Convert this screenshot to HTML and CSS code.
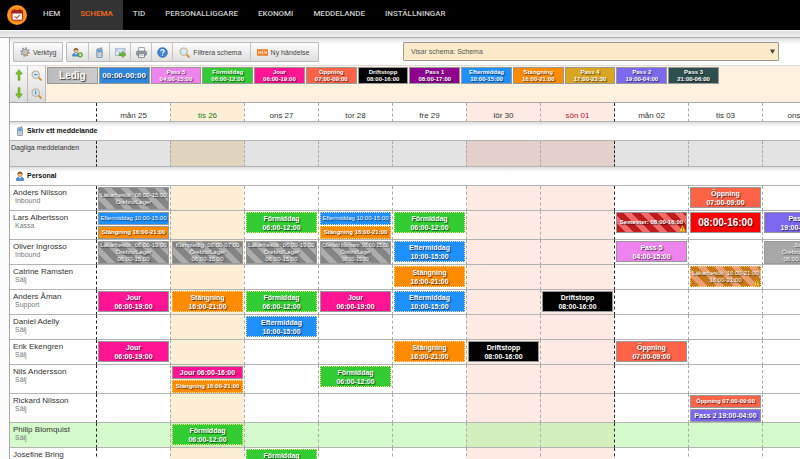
FILE: index.html
```
<!DOCTYPE html>
<html lang="sv">
<head>
  <meta charset="UTF-8">
  <meta name="viewport" content="width=device-width, initial-scale=1.0">
  <title>Schema</title>
  <link rel="stylesheet" href="styles.css">
</head>
<body>
  <svg class="sprite" aria-hidden="true">
    <symbol id="warn" viewBox="0 0 12 12">
      <path d="M6 1 L11.5 11 H0.5 Z" fill="#ffd83a" stroke="#c98a00" stroke-linejoin="round"/>
      <path d="M6 4.2 V7.6 M6 8.6 V9.8" stroke="#5a3a00" stroke-width="1.3"/>
    </symbol>
    <symbol id="phone" viewBox="0 0 16 16">
      <path d="M10.5 0.5 V4" stroke="#6b7f92" stroke-width="1.5"/>
      <rect x="4" y="2.5" width="8" height="13" rx="1.5" fill="#a9bccd" stroke="#6b7f92"/>
      <rect x="5.5" y="4" width="5" height="3.5" fill="#4da3e8"/>
      <path d="M5.5 9.5 H10.5 M5.5 11.5 H10.5 M5.5 13.5 H10.5" stroke="#fff" stroke-dasharray="1.2 0.7"/>
    </symbol>
    <symbol id="person" viewBox="0 0 16 16">
      <path d="M2 15 C2 10.5 4.5 9.5 8 9.5 C11.5 9.5 14 10.5 14 15 Z" fill="#4b8fdc" stroke="#2b62a8"/>
      <path d="M6.2 9.5 L8 12.5 L9.8 9.5 Z" fill="#fff"/>
      <circle cx="8" cy="5" r="3.6" fill="#f6c48b" stroke="#a8682c"/>
      <path d="M4.2 5 C4 0 12 0 11.8 5 C10.5 3.4 6.5 3.6 4.2 5 Z" fill="#8a4b16"/>
    </symbol>
    <symbol id="lens" viewBox="0 0 16 16">
      <path d="M10.5 10.5 L14.5 14.5" stroke="#d8892b" stroke-width="2.6" stroke-linecap="round"/>
      <circle cx="6.8" cy="6.8" r="5.3" fill="#d3eafa" stroke="#c0a880" stroke-width="1.5"/>
    </symbol>
    <symbol id="arrow" viewBox="0 0 12 18">
      <path d="M6 1 L11 7 L9 8.2 L7.4 6.4 V17 H4.6 V6.4 L3 8.2 L1 7 Z" fill="#7cc427" stroke="#4d8d10" stroke-width="0.8"/>
    </symbol>
  </svg>

  <header class="topbar">
    <a href="#" class="logo" aria-label="Start">
      <svg viewBox="0 0 20 20" width="20" height="20">
        <circle cx="10" cy="10" r="10" fill="#ff8a0c"/>
        <circle cx="10" cy="10" r="8.6" fill="none" stroke="#ffa843" stroke-width="0.8"/>
        <rect x="5" y="5.6" width="10.4" height="9.6" rx="1.2" fill="#fff" stroke="#a3241c"/>
        <rect x="4.6" y="5.2" width="11.2" height="3.4" rx="0.8" fill="#a3241c"/>
        <path d="M7.4 4 V6.6 M13 4 V6.6" stroke="#a3241c" stroke-width="1.2"/>
        <path d="M7.6 11.4 L9.6 13.2 L13 10" fill="none" stroke="#c9524a" stroke-width="1.1"/>
      </svg>
    </a>
    <nav>
      <a href="#">HEM</a>
      <a href="#" class="active">SCHEMA</a>
      <a href="#">TID</a>
      <a href="#">PERSONALLIGGARE</a>
      <a href="#">EKONOMI</a>
      <a href="#">MEDDELANDE</a>
      <a href="#">INSTÄLLNINGAR</a>
    </nav>
  </header>

  <main class="panel">
    <div class="toolbar">
      <div class="btn-group">
        <button type="button">
          <svg viewBox="0 0 16 16" width="10" height="10">
            <circle cx="8" cy="8" r="6.2" fill="none" stroke="#8c8c8c" stroke-width="2.6" stroke-dasharray="2.6 2.2"/>
            <circle cx="8" cy="8" r="4.4" fill="#d5d5d5" stroke="#8c8c8c" stroke-width="1.4"/>
            <circle cx="8" cy="8" r="1.6" fill="#fff" stroke="#8c8c8c"/>
            <path d="M9 14 L14 9" stroke="#d89a4c" stroke-width="2"/>
          </svg>
          Verktyg
        </button>
      </div>
      <div class="btn-group">
        <button type="button" class="icon-btn" aria-label="Ny person">
          <svg viewBox="0 0 18 16" width="11" height="11">
            <use href="#person" x="-1" width="15" height="15"/>
            <circle cx="13.5" cy="11.8" r="3.8" fill="#5cb531" stroke="#35801a" stroke-width="0.8"/>
            <path d="M13.5 9.6 V14 M11.3 11.8 H15.7" stroke="#fff" stroke-width="1.3"/>
          </svg>
        </button>
        <button type="button" class="icon-btn" aria-label="SMS">
          <svg width="11" height="11"><use href="#phone"/></svg>
        </button>
        <button type="button" class="icon-btn" aria-label="E-post">
          <svg viewBox="0 0 16 16" width="11" height="11">
            <rect x="0.5" y="2.5" width="14" height="10" fill="#dbe9f5" stroke="#8aa5bd"/>
            <path d="M1 3 L7.5 8.5 L14 3" fill="none" stroke="#8aa5bd"/>
            <path d="M6 9.4 H11 V6.6 L16 11 L11 15.4 V12.6 H6 Z" fill="#6cbf2c" stroke="#3e8414" stroke-width="0.8"/>
          </svg>
        </button>
        <button type="button" class="icon-btn" aria-label="Skriv ut">
          <svg viewBox="0 0 16 16" width="11" height="11">
            <rect x="4" y="1" width="8" height="6" fill="#fff" stroke="#7a838c"/>
            <rect x="1" y="6" width="14" height="6" rx="1.2" fill="#9aa3ab" stroke="#5d666f"/>
            <rect x="3.5" y="10" width="9" height="5" fill="#fff" stroke="#5d666f"/>
            <path d="M5 12.5 H11" stroke="#9aa3ab"/>
          </svg>
        </button>
        <button type="button" class="icon-btn" aria-label="Hjälp">
          <svg viewBox="0 0 16 16" width="11" height="11">
            <circle cx="8" cy="8" r="7" fill="#3f86d8" stroke="#1f559c"/>
            <path d="M5.6 6.2 C5.6 3 10.6 3.2 10.4 6 C10.3 7.6 8 7.6 8 9.6 M8 11 V12.6" fill="none" stroke="#fff" stroke-width="1.7"/>
          </svg>
        </button>
        <button type="button" class="text-btn">
          <svg width="11" height="11"><use href="#lens"/></svg>
          Filtrera schema
        </button>
        <button type="button" class="text-btn">
          <svg viewBox="0 0 20 12" width="11" height="7">
            <rect width="20" height="12" rx="1" fill="#f07818"/>
            <path d="M3 9 V3.5 L6.5 8.5 V3 M12 3.5 H9 V8.5 H12 M9 6 H11.5 M13.5 3 L14.8 8.5 L16 4.5 L17.2 8.5 L18.4 3" fill="none" stroke="#fff" stroke-width="1.1"/>
          </svg>
          Ny händelse
        </button>
      </div>
      <div class="view-select">
        <select aria-label="Visar schema">
          <option>Visar schema: Schema</option>
        </select>
        <svg viewBox="0 0 5 5" width="5" height="5"><path d="M0 0.5 H5 L2.5 5 Z" fill="#444"/></svg>
      </div>
    </div>

    <div class="palette">
      <div class="palette-tools">
        <button type="button" aria-label="Upp"><svg width="8" height="12"><use href="#arrow"/></svg></button>
        <button type="button" aria-label="Zooma ut">
          <svg viewBox="0 0 16 16" width="11" height="11"><use href="#lens"/><path d="M4.4 6.8 H9.2" stroke="#3677b0" stroke-width="1.5"/></svg>
        </button>
        <button type="button" aria-label="Ner"><svg class="flip" width="8" height="12"><use href="#arrow"/></svg></button>
        <button type="button" aria-label="Zooma in">
          <svg viewBox="0 0 16 16" width="11" height="11"><use href="#lens"/><path d="M6.8 4 V9.6" stroke="#3677b0" stroke-width="1.5"/></svg>
        </button>
      </div>
      <div class="palette-shifts">
        <div class="shift free">Ledig</div>
        <div class="shift custom">00:00-00:00</div>
        <div class="shift pass5">Pass 5<br>04:00-15:00</div>
        <div class="shift morning">Förmiddag<br>06:00-12:00</div>
        <div class="shift jour">Jour<br>06:00-19:00</div>
        <div class="shift opening">Öppning<br>07:00-09:00</div>
        <div class="shift stop">Driftstopp<br>08:00-16:00</div>
        <div class="shift pass1">Pass 1<br>08:00-17:00</div>
        <div class="shift afternoon">Eftermiddag<br>10:00-15:00</div>
        <div class="shift closing">Stängning<br>16:00-21:00</div>
        <div class="shift pass4">Pass 4<br>17:00-23:30</div>
        <div class="shift pass2">Pass 2<br>19:00-04:00</div>
        <div class="shift pass3">Pass 3<br>21:00-06:00</div>
      </div>
    </div>

    <div class="schedule">
      <table>
        <colgroup>
          <col class="name-col">
          <col><col class="today"><col><col><col>
          <col class="weekend"><col class="weekend">
          <col><col><col>
        </colgroup>
        <thead>
          <tr>
            <th></th>
            <th class="week">mån 25</th>
            <th class="is-today">tis 26</th>
            <th>ons 27</th>
            <th>tor 28</th>
            <th>fre 29</th>
            <th>lör 30</th>
            <th class="is-sunday">sön 01</th>
            <th class="week">mån 02</th>
            <th>tis 03</th>
            <th>ons 04</th>
          </tr>
        </thead>
        <tbody>
          <tr class="section">
            <th colspan="11"><svg width="10" height="10"><use href="#phone"/></svg>Skriv ett meddelande</th>
          </tr>
          <tr class="messages">
            <th>Dagliga meddelanden</th>
            <td class="week"></td><td></td><td></td><td></td><td></td><td></td><td></td><td class="week"></td><td></td><td></td>
          </tr>
          <tr class="section">
            <th colspan="11"><svg width="10" height="10"><use href="#person"/></svg>Personal</th>
          </tr>
          <tr>
            <th>Anders Nilsson<small>Inbound</small></th>
            <td class="week"><div class="shift absence">Läkarbesök: 08:00-15:00<br>Örebro/Lager</div></td>
            <td></td><td></td><td></td><td></td><td></td><td></td>
            <td class="week"></td>
            <td><div class="shift opening">Öppning<br>07:00-09:00</div></td>
            <td></td>
          </tr>
          <tr class="tall">
            <th>Lars Albertsson<small>Kassa</small></th>
            <td class="week">
              <div class="shift afternoon half narrow">Eftermiddag 10:00-15:00</div>
              <div class="shift closing half">Stängning 16:00-21:00</div>
            </td>
            <td></td>
            <td><div class="shift morning open">Förmiddag<br>06:00-12:00</div></td>
            <td>
              <div class="shift afternoon half narrow open">Eftermiddag 10:00-15:00</div>
              <div class="shift closing half open">Stängning 16:00-21:00</div>
            </td>
            <td><div class="shift morning open">Förmiddag<br>06:00-12:00</div></td>
            <td></td><td></td>
            <td class="week"><div class="shift vacation">Semester: 08:00-16:00<svg class="warn" width="7" height="7"><use href="#warn"/></svg></div></td>
            <td><div class="shift extra">08:00-16:00</div></td>
            <td><div class="shift pass2">Pass 2<br>19:00-04:00</div></td>
          </tr>
          <tr>
            <th>Oliver Ingrosso<small>Inbound</small></th>
            <td class="week"><div class="shift absence">Läkarbesök: 06:00-19:00<br>Örebro/Lager<br>06:00-15:00</div></td>
            <td><div class="shift absence">Kompledig: 06:00-07:00<br>Örebro/Lager<br>06:00-15:00</div></td>
            <td><div class="shift absence">Läkarbesök: 06:00-19:00<br>Örebro/Lager<br>06:00-15:00</div></td>
            <td><div class="shift absence long">Obetald frånvaro: 06:00-15:00<br>Örebro/Lager<br>06:00-15:00</div></td>
            <td><div class="shift afternoon open">Eftermiddag<br>10:00-15:00</div></td>
            <td></td><td></td>
            <td class="week"><div class="shift pass5">Pass 5<br>04:00-15:00</div></td>
            <td></td>
            <td><div class="shift absence plain">Jour<br>Örebro/Lager<br>06:00-15:00</div></td>
          </tr>
          <tr>
            <th>Catrine Ramsten<small>Sälj</small></th>
            <td class="week"></td><td></td><td></td><td></td>
            <td><div class="shift closing open">Stängning<br>16:00-21:00</div></td>
            <td></td><td></td>
            <td class="week"></td>
            <td><div class="shift sick open">Läkarbesök: 16:00-21:00<br>16:00-21:00<svg class="warn" width="7" height="7"><use href="#warn"/></svg></div></td>
            <td></td>
          </tr>
          <tr>
            <th>Anders Åman<small>Support</small></th>
            <td class="week"><div class="shift jour">Jour<br>06:00-19:00</div></td>
            <td><div class="shift closing open">Stängning<br>16:00-21:00</div></td>
            <td><div class="shift morning open">Förmiddag<br>06:00-12:00</div></td>
            <td><div class="shift jour">Jour<br>06:00-19:00</div></td>
            <td><div class="shift afternoon open">Eftermiddag<br>10:00-15:00</div></td>
            <td></td>
            <td><div class="shift stop">Driftstopp<br>08:00-16:00</div></td>
            <td class="week"></td><td></td><td></td>
          </tr>
          <tr>
            <th>Daniel Adelly<small>Sälj</small></th>
            <td class="week"></td><td></td>
            <td><div class="shift afternoon open">Eftermiddag<br>10:00-15:00</div></td>
            <td></td><td></td><td></td><td></td>
            <td class="week"></td><td></td><td></td>
          </tr>
          <tr>
            <th>Erik Ekengren<small>Sälj</small></th>
            <td class="week"><div class="shift jour">Jour<br>06:00-19:00</div></td>
            <td></td><td></td><td></td>
            <td><div class="shift closing open">Stängning<br>16:00-21:00</div></td>
            <td><div class="shift stop">Driftstopp<br>08:00-16:00</div></td>
            <td></td>
            <td class="week"><div class="shift opening">Öppning<br>07:00-09:00</div></td>
            <td></td><td></td>
          </tr>
          <tr class="tall">
            <th>Nils Andersson<small>Sälj</small></th>
            <td class="week"></td>
            <td>
              <div class="shift jour half wide">Jour 06:00-16:00</div>
              <div class="shift closing half open">Stängning 16:00-21:00</div>
            </td>
            <td></td>
            <td><div class="shift morning open">Förmiddag<br>06:00-12:00</div></td>
            <td></td><td></td><td></td>
            <td class="week"></td><td></td><td></td>
          </tr>
          <tr class="tall">
            <th>Rickard Nilsson<small>Sälj</small></th>
            <td class="week"></td><td></td><td></td><td></td><td></td><td></td><td></td>
            <td class="week"></td>
            <td>
              <div class="shift opening half">Öppning 07:00-09:00</div>
              <div class="shift pass2 half wide">Pass 2 19:00-04:00</div>
            </td>
            <td></td>
          </tr>
          <tr class="selected">
            <th>Philip Blomquist<small>Sälj</small></th>
            <td class="week"></td>
            <td><div class="shift morning open">Förmiddag<br>06:00-12:00</div></td>
            <td></td><td></td><td></td><td></td><td></td>
            <td class="week"></td><td></td><td></td>
          </tr>
          <tr>
            <th>Josefine Bring<small>Sälj</small></th>
            <td class="week"></td><td></td>
            <td><div class="shift morning open">Förmiddag<br>06:00-12:00</div></td>
            <td></td><td></td><td></td><td></td>
            <td class="week"></td><td></td><td></td>
          </tr>
        </tbody>
      </table>
    </div>
  </main>
</body>
</html>
```

FILE: styles.css
```
* {
  box-sizing: border-box;
}
body {
  margin: 0;
  height: 100vh;
  overflow: hidden;
  font-family: "Liberation Sans", Arial, sans-serif;
  font-size: 8px;
  color: #333;
  background: #fcfcfc;
}
button, select {
  font-family: inherit;
}
svg {
  flex: none;
}
.sprite {
  display: none;
}

/* top navigation */
.topbar {
  display: flex;
  height: 30px;
  background: #000;
}
.logo {
  display: flex;
  align-items: center;
  padding: 0 6px 0 7px;
}
nav {
  display: flex;
}
nav a {
  padding: 0 10px;
  font: 500 8px/28px Roboto, sans-serif;
  color: #ccc;
  text-decoration: none;
}
nav a.active {
  background: #333;
  color: #ff6a1a;
}

/* panel */
.panel {
  border-left: 1px solid #a8a8a8;
  margin-left: 9px;
  background: #fff;
}
.panel::before {
  content: "";
  display: block;
  height: 7px;
  margin-left: -10px;
  background: linear-gradient(#fff, #dcdcdc 2px, #f2f2f2);
  border-bottom: 1px solid #a8a8a8;
}
.toolbar {
  display: flex;
  gap: 3px;
  height: 27px;
  padding: 4px 21px 3px 3px;
  background: linear-gradient(#dedede, #fff 6px);
}
.btn-group {
  display: flex;
  border: 1px solid #bbb;
  border-radius: 1px;
  background: linear-gradient(#fdfdfd, #dedede);
}
.btn-group button {
  display: flex;
  align-items: center;
  gap: 3px;
  padding: 0 6px;
  border: 0;
  border-left: 1px solid #c4c4c4;
  background: none;
  font-size: 7px;
  white-space: nowrap;
  color: #444;
}
.btn-group button:first-child {
  border-left: 0;
}
.btn-group .icon-btn {
  width: 21px;
  padding: 0;
  justify-content: center;
}
.btn-group .text-btn {
  padding: 0 8px 0 6px;
}
.view-select {
  position: relative;
  flex: 1;
  max-width: 376px;
  margin-left: auto;
}
.view-select select {
  appearance: none;
  width: 100%;
  height: 19px;
  padding: 0 7px;
  border: 1px solid #999;
  border-radius: 1px;
  background: #fdeac8;
  font-size: 7px;
  color: #555;
}
.view-select svg {
  position: absolute;
  right: 4px;
  top: 7px;
  pointer-events: none;
}

/* shift palette */
.palette {
  display: flex;
  height: 38px;
  border-top: 1px solid #ddd;
  border-bottom: 1px solid #a8a8a8;
  background: #fef2df;
}
.palette-tools {
  display: grid;
  grid-template-columns: 18px 18px;
  grid-template-rows: 1fr 1fr;
  background: linear-gradient(#f8f8f8, #dcdcdc);
}
.palette-tools button {
  display: flex;
  align-items: center;
  justify-content: center;
  padding: 0;
  border: 0;
  border-right: 1px solid #bbb;
  background: none;
}
.flip {
  transform: rotate(180deg);
}
.palette-shifts {
  display: flex;
  flex: 1;
  gap: 1px;
  max-width: 673px;
  padding: 1px 0 0 1px;
}
.palette-shifts .shift {
  flex: 1;
  height: 17px;
  font-size: 6px;
  line-height: 7px;
}
.palette-shifts .custom {
  font-size: 8px;
}
.palette-shifts .free {
  font-size: 10px;
}

/* schedule */
.schedule {
  overflow: hidden;
}
table {
  width: 826px;
  table-layout: fixed;
  border-spacing: 0;
}
.name-col {
  width: 86px;
}
.today {
  background: #fcefd5;
}
.weekend {
  background: #ffeae4;
}
th, td {
  height: 25px;
  padding: 1px 1px 0 1px;
  border-bottom: 1px solid #b4b4b4;
  border-left: 1px dashed #aaa;
  vertical-align: top;
}
th:first-child {
  border-left: 0;
}
.week {
  border-left-color: #222;
}
thead th {
  height: 19px;
  padding-top: 8px;
  font-weight: normal;
  line-height: 10px;
}
.is-today {
  color: #1c7c14;
}
.is-sunday {
  color: #b3202c;
}
tbody th {
  padding: 2px 0 0 3px;
  font-weight: normal;
  line-height: 9px;
  text-align: left;
  white-space: nowrap;
}
th small {
  display: block;
  padding-left: 2px;
  font-size: 7px;
  line-height: 8px;
  color: #777;
}
.tall td, .tall th {
  height: 29px;
}
.section th {
  height: 19px;
  padding: 4px 5px 0;
  background: linear-gradient(#dedede, #fff 5px);
  font-size: 7px;
  font-weight: bold;
  line-height: 10px;
  color: #111;
}
.section svg {
  margin-right: 2px;
  vertical-align: top;
}
.messages th, .messages td {
  height: 26px;
  background: rgba(0, 0, 0, 0.11);
}
.messages th {
  padding-left: 1px;
  font-size: 7px;
}
.selected {
  background: rgba(150, 245, 130, 0.4);
}

/* shifts */
.shift {
  position: relative;
  display: flex;
  align-items: center;
  justify-content: center;
  height: 21px;
  border: 1px solid #999;
  font-size: 7px;
  font-weight: bold;
  line-height: 9px;
  text-align: center;
  white-space: nowrap;
  overflow: hidden;
  color: #fff;
  text-shadow: 1px 1px 1px rgba(0, 0, 0, 0.7);
}
.open {
  border: 1px dotted #ffe08a;
}
.half {
  height: 13px;
  font-size: 6px;
}
.half + .half {
  margin-top: 1px;
}
.narrow {
  font-weight: normal;
}
.wide {
  font-size: 7px;
}
.free {
  background: linear-gradient(90deg, #bbb, #ccc);
}
.custom {
  background: #2f86dd;
}
.morning {
  background: #32cd32;
}
.jour {
  background: #ff1493;
}
.opening {
  background: #ff6347;
}
.stop {
  background: #000;
}
.pass1 {
  background: #900090;
}
.pass2 {
  background: #7b68ee;
}
.pass3 {
  background: #2f4f4f;
}
.pass4 {
  background: #daa520;
}
.pass5 {
  background: #ee82ee;
}
.afternoon {
  background: #1e90ff;
}
.closing {
  background: #ff8c00;
}
.extra {
  background: #f00;
  font-size: 10px;
}
.absence {
  height: 23px;
  background: repeating-linear-gradient(45deg, #858585 0 6px, #adadad 6px 12px);
  font-size: 6px;
  font-weight: normal;
  line-height: 7px;
}
.long {
  font-size: 5px;
}
.plain {
  background: #a8a8a8;
}
.vacation {
  background: repeating-linear-gradient(45deg, #c01c1c 0 6px, #f26a6a 6px 12px);
  font-size: 6px;
}
.sick {
  background: repeating-linear-gradient(45deg, #c87818 0 6px, #e8a070 6px 12px);
  font-size: 6px;
  font-weight: normal;
  line-height: 7px;
}
.warn {
  position: absolute;
  right: 0;
  bottom: 0;
}
```
